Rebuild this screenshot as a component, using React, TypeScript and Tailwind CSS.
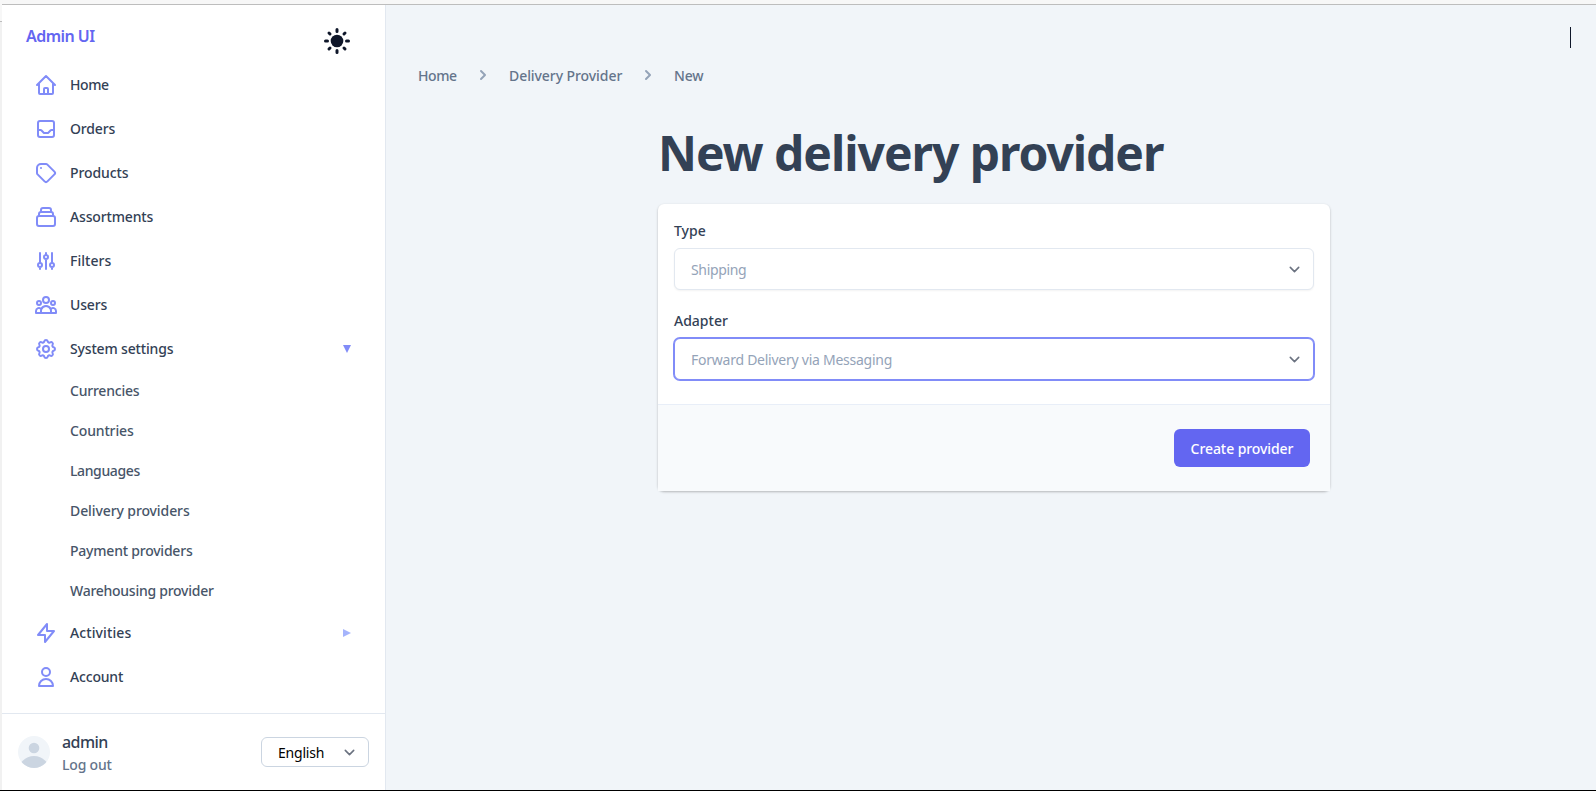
import type { ReactNode } from "react";
import type { IconType } from "react-icons";
import {
  HiOutlineHome,
  HiOutlineInbox,
  HiOutlineTag,
  HiOutlineCollection,
  HiOutlineAdjustments,
  HiOutlineUserGroup,
  HiOutlineCog,
  HiOutlineLightningBolt,
  HiOutlineUser,
  HiChevronRight,
} from "react-icons/hi";

type NavEntry = {
  label: string;
  icon: IconType;
  tracking: string;
  arrow?: "down" | "right";
  children?: { label: string; tracking: string }[];
};

const navigation: NavEntry[] = [
  { label: "Home", icon: HiOutlineHome, tracking: "tracking-[-0.4px]" },
  { label: "Orders", icon: HiOutlineInbox, tracking: "tracking-[-0.15px]" },
  { label: "Products", icon: HiOutlineTag, tracking: "tracking-[-0.1px]" },
  { label: "Assortments", icon: HiOutlineCollection, tracking: "tracking-[-0.15px]" },
  { label: "Filters", icon: HiOutlineAdjustments, tracking: "tracking-[0.05px]" },
  { label: "Users", icon: HiOutlineUserGroup, tracking: "tracking-[-0.15px]" },
  {
    label: "System settings",
    icon: HiOutlineCog,
    tracking: "tracking-[-0.16px]",
    arrow: "down",
    children: [
      { label: "Currencies", tracking: "tracking-[-0.22px]" },
      { label: "Countries", tracking: "tracking-[-0.15px]" },
      { label: "Languages", tracking: "tracking-[-0.38px]" },
      { label: "Delivery providers", tracking: "tracking-[-0.1px]" },
      { label: "Payment providers", tracking: "tracking-[-0.22px]" },
      { label: "Warehousing provider", tracking: "tracking-[-0.26px]" },
    ],
  },
  { label: "Activities", icon: HiOutlineLightningBolt, tracking: "tracking-[0.1px]", arrow: "right" },
  { label: "Account", icon: HiOutlineUser, tracking: "tracking-[-0.18px]" },
];

function SunIcon() {
  return (
    <svg viewBox="-13 -13 26 26" className="size-[26px] text-[#0f172a]" stroke="currentColor" strokeWidth="3" strokeLinecap="round">
      <circle r="6.3" fill="currentColor" stroke="none" />
      <path d="M0-11.5v2M0 9.5v2M-11.5 0h2M9.5 0h2M-8-8l1 1M8-8l-1 1M-8 8l1-1M8 8l-1-1" />
    </svg>
  );
}

function Caret() {
  return (
    <svg viewBox="0 0 20 20" fill="none" className="size-[21px] text-[#6b7280]">
      <path d="M6 8l4 4 4-4" stroke="currentColor" strokeWidth="1.5" strokeLinecap="round" strokeLinejoin="round" />
    </svg>
  );
}

function Avatar() {
  return (
    <svg viewBox="0 0 32 32" className="size-8 rounded-full bg-[#f1f5f9] text-[#cbd5e1]" fill="currentColor">
      <circle cx="16" cy="12" r="5.3" />
      <circle cx="16" cy="36" r="16" />
    </svg>
  );
}

function Arrow({ direction }: { direction: "down" | "right" }) {
  return direction === "down" ? (
    <svg viewBox="0 0 8 8" className="size-2 text-[#818cf8]" fill="currentColor">
      <path d="M0 0h8L4 8z" />
    </svg>
  ) : (
    <svg viewBox="0 0 8 8" className="size-2 text-[#a5b4fc]" fill="currentColor">
      <path d="M0 0l8 4-8 4z" />
    </svg>
  );
}

function NavItem({ entry }: { entry: NavEntry }) {
  const Icon = entry.icon;
  return (
    <li>
      <a className="flex h-11 items-center gap-3 pr-[34px] pl-8">
        <Icon className="size-6 text-[#818cf8]" />
        <span className={`grow ${entry.tracking}`}>{entry.label}</span>
        {entry.arrow && <Arrow direction={entry.arrow} />}
      </a>
      {entry.children && (
        <ul className="text-[#475569]">
          {entry.children.map((child) => (
            <li key={child.label} className={`flex h-10 items-center pl-[68px] ${child.tracking}`}>
              {child.label}
            </li>
          ))}
        </ul>
      )}
    </li>
  );
}

function Sidebar() {
  return (
    <aside className="flex w-[384px] shrink-0 flex-col border-r border-[#e2e8f0] bg-white">
      <div className="flex h-[58px] shrink-0 items-start justify-between pr-[35px] pl-6">
        <span className="pt-[19px] text-base font-semibold tracking-[-0.55px] text-[#6366f1]">Admin UI</span>
        <span className="pt-[23px]">
          <SunIcon />
        </span>
      </div>
      <ul className="grow text-sm font-medium text-[#334155]">
        {navigation.map((entry) => (
          <NavItem key={entry.label} entry={entry} />
        ))}
      </ul>
      <div className="flex h-[77px] shrink-0 items-center border-t border-[#e2e8f0] pr-4 pl-4">
        <Avatar />
        <div className="ml-3 grow pt-px font-medium">
          <p className="text-base tracking-[-0.55px] text-[#334155]">admin</p>
          <p className="text-sm leading-[22px] tracking-[-0.2px] text-[#64748b]">Log out</p>
        </div>
        <button className="flex h-[30px] w-[108px] items-center justify-between rounded-md border border-[#cbd5e1] pr-2 pl-4 text-sm text-black">
          <span className="pt-0.5 tracking-[-0.2px]">English</span>
          <Caret />
        </button>
      </div>
    </aside>
  );
}

function Breadcrumbs() {
  return (
    <nav className="flex h-5 items-center text-sm font-medium whitespace-nowrap text-[#64748b]">
      <span className="w-[39px] tracking-[-0.4px]">Home</span>
      <HiChevronRight className="mb-0.5 ml-4 size-5 text-[#94a3b8]" />
      <span className="ml-4 w-[113px] tracking-[-0.07px]">Delivery Provider</span>
      <HiChevronRight className="mb-0.5 ml-4 size-5 text-[#94a3b8]" />
      <span className="ml-4 tracking-[-0.15px]">New</span>
    </nav>
  );
}

function Field({ label, className, children }: { label: string; className: string; children: ReactNode }) {
  return (
    <div>
      <label className="block h-5 pt-px text-sm font-medium text-[#334155]">{label}</label>
      <div className={`mt-2 flex h-[42px] items-center justify-between rounded-md border bg-white pr-2 pl-4 text-sm text-[#94a3b8] ${className}`}>
        {children}
        <Caret />
      </div>
    </div>
  );
}

function ProviderForm() {
  return (
    <form className="h-[287px] rounded-md bg-white shadow-[0_1px_3px_0_rgba(0,0,0,0.15),0_1px_2px_0_rgba(0,0,0,0.12)]">
      <div className="flex h-[200px] flex-col gap-5 px-4 pt-4">
        <Field label="Type" className="border-[#e2e8f0] shadow-[0_1px_2px_0_rgba(0,0,0,0.05)]">
          <span className="pt-0.5 tracking-[-0.35px]">Shipping</span>
        </Field>
        <Field label="Adapter" className="border-[#818cf8] ring-1 ring-[#818cf8]">
          <span className="pt-0.5 tracking-[-0.25px]">Forward Delivery via Messaging</span>
        </Field>
      </div>
      <div className="flex h-[87px] items-start justify-end border-t border-[#e8eef8] bg-[#f8fafc] pt-6 pr-5">
        <button className="h-[38px] w-[136px] rounded-md bg-[#6366f1] pt-px text-sm font-medium tracking-[-0.08px] text-white">
          Create provider
        </button>
      </div>
    </form>
  );
}

export default function App() {
  return (
    <div className="flex h-[791px] w-[1596px] overflow-hidden border-b border-black font-['Noto_Sans','Open_Sans',sans-serif]">
      <div className="w-0.5 shrink-0 bg-[#f1f1f1]">
        <div className="h-[22px] border-b border-[#bdbdbd] bg-[#f7f7f7]" />
      </div>
      <div className="flex grow flex-col">
        <div className="h-[5px] shrink-0 border-b border-[#bdbdbd] bg-[#f7f7f7]" />
        <div className="flex grow">
          <Sidebar />
          <main className="grow bg-[#f1f5f9]">
            <div className="flex h-[61px] justify-end pt-[22px] pr-[25px]">
              <div className="h-[21px] w-px bg-[#0f172a]" />
            </div>
            <div className="pl-8">
              <Breadcrumbs />
            </div>
            <div className="ml-[272px] w-[672px]">
              <h1 className="pt-[43px] text-5xl leading-[48px] font-bold tracking-[-1.05px] whitespace-nowrap text-[#334155]">
                New delivery provider
              </h1>
              <div className="pt-[27px]">
                <ProviderForm />
              </div>
            </div>
          </main>
        </div>
      </div>
    </div>
  );
}
